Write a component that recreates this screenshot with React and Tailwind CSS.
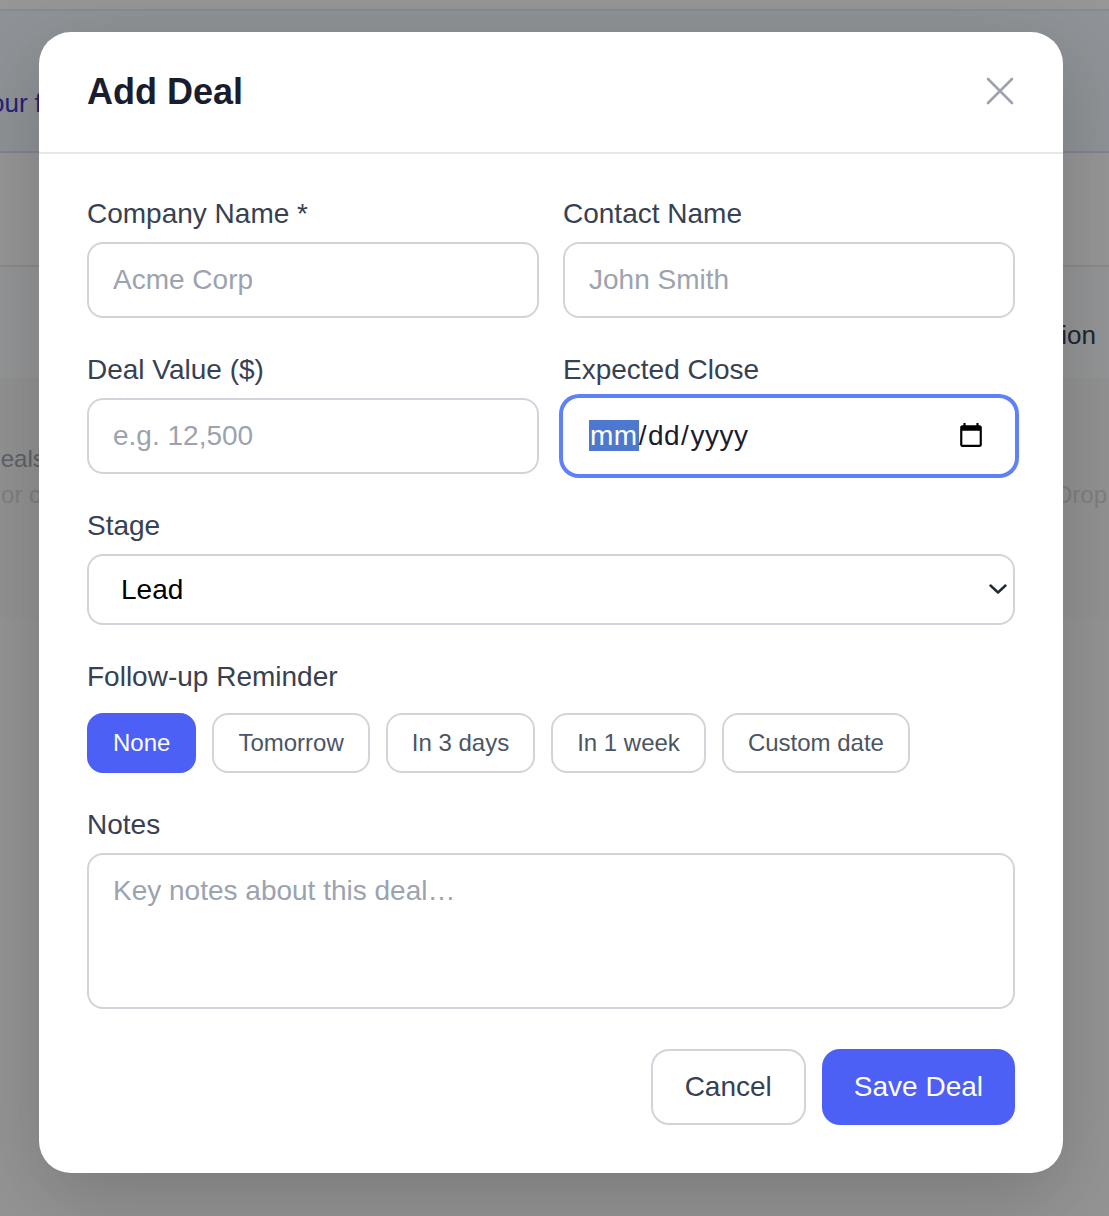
import { useEffect, useRef } from 'react';

const inputCls = 'h-[76px] w-full rounded-[16px] border-2 border-[#d1d5db] bg-white px-6 text-[28px] text-[#1a1d2e] outline-none placeholder:text-[#9ca3af]';
const labelCls = 'mb-[12px] block text-[28px] leading-[32px] text-[#374151]';
const reminders = ['None', 'Tomorrow', 'In 3 days', 'In 1 week', 'Custom date'];

function Field({ label, children }) {
  return (
    <div>
      <label className={labelCls}>{label}</label>
      {children}
    </div>
  );
}

function BackgroundPage() {
  return (
    <div className="h-[1216px] overflow-hidden bg-[#f7f7f8] text-[28px]">
      <div className="h-[11px] border-b-2 border-[#e5e7eb] bg-[#fafafa]" />
      <div className="flex h-[142px] items-end border-b-2 border-[#d5dcf5] bg-[#eef3fa] pb-[28px]">
        <span className="-ml-[23px] whitespace-nowrap text-[26px] text-[#4338ca]">your follow-ups</span>
      </div>
      <div className="h-[114px] border-b-2 border-[#e5e7eb] bg-[#fbfbfb]" />
      <div className="flex h-[111px] items-center justify-end bg-[#f7f8fb] pr-[13px] pt-[25px] text-[26px] text-[#374151]">Notification</div>
      <div className="h-[240px] bg-[#f3f3f3] pt-[63px]">
        <div className="-ml-[50px] whitespace-nowrap text-[24px] leading-[36px] text-[#9ca3af]">No deals yet</div>
        <div className="flex items-center justify-between whitespace-nowrap text-[24px] leading-[36px] text-[#d1d5db]">
          <span className="-ml-[95px]">Add one or create</span>
          <span className="mr-[2px]">Drop</span>
        </div>
      </div>
    </div>
  );
}

export default function App() {
  const dateRef = useRef(null);

  useEffect(() => {
    dateRef.current?.focus();
  }, []);

  return (
    <div className="relative h-[1216px] overflow-hidden font-['Liberation_Sans',Arial,sans-serif]">
      <BackgroundPage />
      <div className="absolute inset-0 bg-black/40">
        <div className="ml-[39px] mt-[32px] h-[1141px] w-[1024px] rounded-[32px] bg-white shadow-[0_24px_80px_rgba(0,0,0,0.18)]">
          <div className="flex h-[122px] items-center justify-between border-b-2 border-[#e5e7eb] pl-12 pr-[49px]">
            <h2 className="text-[36px] font-bold text-[#1a1d2e]">Add Deal</h2>
            <button className="mb-[2px] text-[#9ca3af]">
              <svg className="block" width="28" height="28" viewBox="0 0 28 28" fill="none" stroke="currentColor" strokeWidth="2.6" strokeLinecap="round">
                <path d="M2 2L26 26M26 2L2 26" />
              </svg>
            </button>
          </div>

          <div className="px-12 pt-[44px]">
            <div className="grid grid-cols-2 gap-x-6 gap-y-[36px]">
              <Field label="Company Name *">
                <input className={inputCls} placeholder="Acme Corp" />
              </Field>
              <Field label="Contact Name">
                <input className={inputCls} placeholder="John Smith" />
              </Field>
              <Field label="Deal Value ($)">
                <input className={inputCls} placeholder="e.g. 12,500" />
              </Field>
              <Field label="Expected Close">
                <input
                  ref={dateRef}
                  type="date"
                  className="h-[76px] w-full rounded-[16px] border-2 border-white bg-white pl-6 pr-[26px] text-[28px] tracking-[0.5px] text-[#1a1d2e] shadow-[0_0_0_4px_#5f80fb] outline-none [&::-webkit-datetime-edit-month-field]:bg-[#4c78d0]! [&::-webkit-datetime-edit-month-field]:text-white!"
                />
              </Field>
            </div>

            <div className="mt-[36px]">
              <Field label="Stage">
                <div className="relative">
                  <select className="h-[71px] w-full appearance-none rounded-[16px] border-2 border-[#d1d5db] bg-white pl-[32px] pr-12 text-[28px] text-black outline-none">
                    <option>Lead</option>
                    <option>Qualified</option>
                    <option>Proposal</option>
                    <option>Won</option>
                  </select>
                  <svg className="pointer-events-none absolute right-[8px] top-[30px]" width="18" height="10" viewBox="0 0 18 10" fill="none" stroke="#1f2937" strokeWidth="2.4" strokeLinecap="round" strokeLinejoin="round">
                    <path d="M1.5 1.5L9 8.5L16.5 1.5" />
                  </svg>
                </div>
              </Field>
            </div>

            <div className="mt-[36px]">
              <label className={labelCls}>Follow-up Reminder</label>
              <div className="mt-[20px] flex gap-4">
                {reminders.map((r, i) => (
                  <button
                    key={r}
                    className={i === 0
                      ? 'h-[60px] rounded-[16px] border-2 border-[#4c60f5] bg-[#4c60f5] px-6 text-[24px] text-white'
                      : 'h-[60px] rounded-[16px] border-2 border-[#d1d5db] bg-white px-6 text-[24px] text-[#4b5563]'}
                  >
                    {r}
                  </button>
                ))}
              </div>
            </div>

            <div className="mt-[36px]">
              <Field label="Notes">
                <textarea
                  className="block h-[156px] w-full resize-none rounded-[16px] border-2 border-[#d1d5db] bg-white px-6 py-[15px] text-[28px] text-[#1a1d2e] outline-none placeholder:text-[#9ca3af]"
                  placeholder="Key notes about this deal…"
                />
              </Field>
            </div>

            <div className="mt-[40px] flex justify-end gap-4">
              <button className="h-[76px] rounded-[18px] border-2 border-[#d1d5db] bg-white px-8 text-[28px] text-[#374151]">Cancel</button>
              <button className="h-[76px] rounded-[18px] bg-[#4c60f5] px-8 text-[28px] text-white">Save Deal</button>
            </div>
          </div>
        </div>
      </div>
    </div>
  );
}
